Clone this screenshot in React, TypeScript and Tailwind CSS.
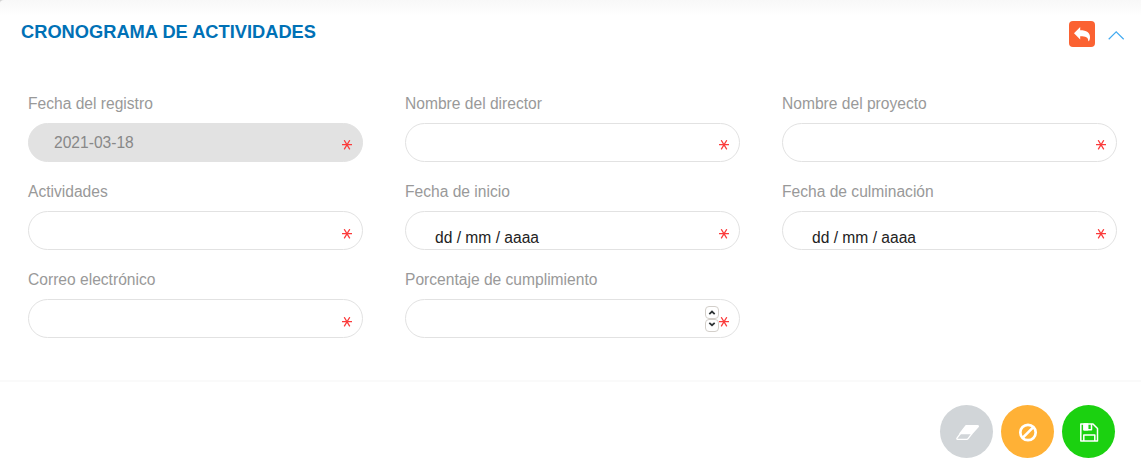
import type { ReactNode } from 'react';

type FieldProps = { label: string; value?: string; disabled?: boolean; date?: boolean; stepper?: boolean; starClass?: string };

function Required({ className }: { className: string }) {
  return (
    <svg className={`absolute right-[10px] h-[10px] w-[10px] ${className}`} viewBox="0 0 10 10" fill="none" stroke="#fb3b3b" strokeWidth="1.25">
      <path d="M0 4.6h10M2.2 .2l5.6 9.2M7.8 .2l-5.6 9.2" />
    </svg>
  );
}

function Stepper() {
  return (
    <div className="absolute right-[20px] top-[6px] flex w-[14px] flex-col">
      {['M3.8 8.1L6.5 5.6L9.2 8.1', 'M3.8 3.9L6.5 6.2L9.2 3.9'].map((d) => (
        <span key={d} className="flex h-[13px] w-[14px] rounded-[4px] border border-[#d3cfca] bg-white">
          <svg className="h-[11px] w-[12px]" viewBox="0.5 1 12 11" fill="none" stroke="#2e3436" strokeWidth="1.8">
            <path d={d} />
          </svg>
        </span>
      ))}
    </div>
  );
}

function Field({ label, value, disabled, date, stepper, starClass = 'top-[17px]' }: FieldProps) {
  return (
    <div className="h-[88px]">
      <div className="h-[28px] text-[15.6px] leading-[18px] text-[#999999]">{label}</div>
      <div className={`relative h-[39px] rounded-[20px] border border-[#e2e2e2] ${disabled ? 'bg-[#e2e2e2]' : 'bg-white'}`}>
        {value && (
          <span className={`block text-[15.6px] leading-[18px] ${date ? 'pl-[29px] pt-[17px] text-[#222222]' : 'pl-[25px] pt-[10px] text-[#888888]'}`}>{value}</span>
        )}
        {stepper && <Stepper />}
        <Required className={starClass} />
      </div>
    </div>
  );
}

function RoundButton({ className, label, children }: { className: string; label: string; children: ReactNode }) {
  return (
    <button aria-label={label} className={`flex h-[53px] w-[53px] items-center justify-center rounded-full ${className}`}>
      {children}
    </button>
  );
}

export default function App() {
  return (
    <main className="flex h-[469px] w-[1141px] flex-col overflow-hidden bg-white font-['Liberation_Sans',Arial,sans-serif]">
      <div className="flex h-[95px] bg-linear-to-br from-[#cccccc] to-white to-[4px]">
        <header className="flex grow justify-between rounded-tl-[4px] bg-linear-to-b from-[#f8f8f8] to-white to-[16px] pl-[21px] pr-[16px] pt-[21px]">
          <h1 className="text-[18.28px] font-bold leading-[22px] text-[#0071b6]">CRONOGRAMA DE ACTIVIDADES</h1>
          <div className="flex items-start gap-[13px]">
            <button aria-label="Volver" className="flex h-[26px] w-[26px] items-center justify-center rounded-[4px] bg-[#fb6232]">
              <svg className="h-[26px] w-[26px]" viewBox="0 0 26 26" fill="white">
                <path d="M5 12.2L11.2 6v3.2c6.5 0 9.8 2.6 9.8 6.8 0 1.7-.4 3.2-1 4.1-.2.3-.7.2-.7-.3-.2-3.4-2.5-4.5-8.1-4.5v3.1z" />
              </svg>
            </button>
            <svg className="mt-[9px] h-[11px] w-[17px]" viewBox="0 0 17 11" fill="none" stroke="#42aaf0" strokeWidth="1.2">
              <path d="M.7 9.2L8.2 1.9L15.7 9.2" />
            </svg>
          </div>
        </header>
      </div>
      <section className="grid h-[285px] grid-cols-[335px_335px_335px] content-start gap-x-[42px] pl-[28px]">
        <Field label="Fecha del registro" value="2021-03-18" disabled starClass="top-[16px]" />
        <Field label="Nombre del director" starClass="top-[16px]" />
        <Field label="Nombre del proyecto" starClass="top-[16px]" />
        <Field label="Actividades" />
        <Field label="Fecha de inicio" value="dd / mm / aaaa" date />
        <Field label="Fecha de culminación" value="dd / mm / aaaa" date />
        <Field label="Correo electrónico" />
        <Field label="Porcentaje de cumplimiento" stepper />
      </section>
      <footer className="flex h-[89px] justify-end gap-[8px] border-t-2 border-[#fafafa] pr-[26px] pt-[23px]">
        <RoundButton label="Limpiar" className="bg-[#d1d5d8]">
          <svg className="h-[53px] w-[53px]" viewBox="0 0 53 53" fill="none" stroke="white" strokeWidth="1.3" strokeLinejoin="round">
            <path d="M26 20.7h11.6c.8 0 1 .5.5 1.1L32 28.5H20z" fill="white" />
            <path d="M20.5 28.5L17 33.2c-.4.6-.2 1.1.5 1.1h9.3c.6 0 .9-.2 1.3-.7L32 28.5" />
          </svg>
        </RoundButton>
        <RoundButton label="Cancelar" className="bg-[#ffb136]">
          <svg className="h-[53px] w-[53px]" viewBox="0 0 53 53" fill="none" stroke="white" strokeWidth="2.7">
            <circle cx="27" cy="27.5" r="7.7" />
            <path d="M21.6 32.9L32.4 22.1" />
          </svg>
        </RoundButton>
        <RoundButton label="Guardar" className="bg-[#1bd110]">
          <svg className="h-[53px] w-[53px]" viewBox="0 0 53 53" fill="none" stroke="white" strokeWidth="1.5" strokeLinejoin="round">
            <path d="M18.8 19H31l4.5 4.5V36H18.8z" />
            <path d="M21.8 36v-6h11V36M22 19v5.8h7.5V19" />
            <path d="M22 19h3.7v5.8H22z" fill="white" />
          </svg>
        </RoundButton>
      </footer>
    </main>
  );
}
